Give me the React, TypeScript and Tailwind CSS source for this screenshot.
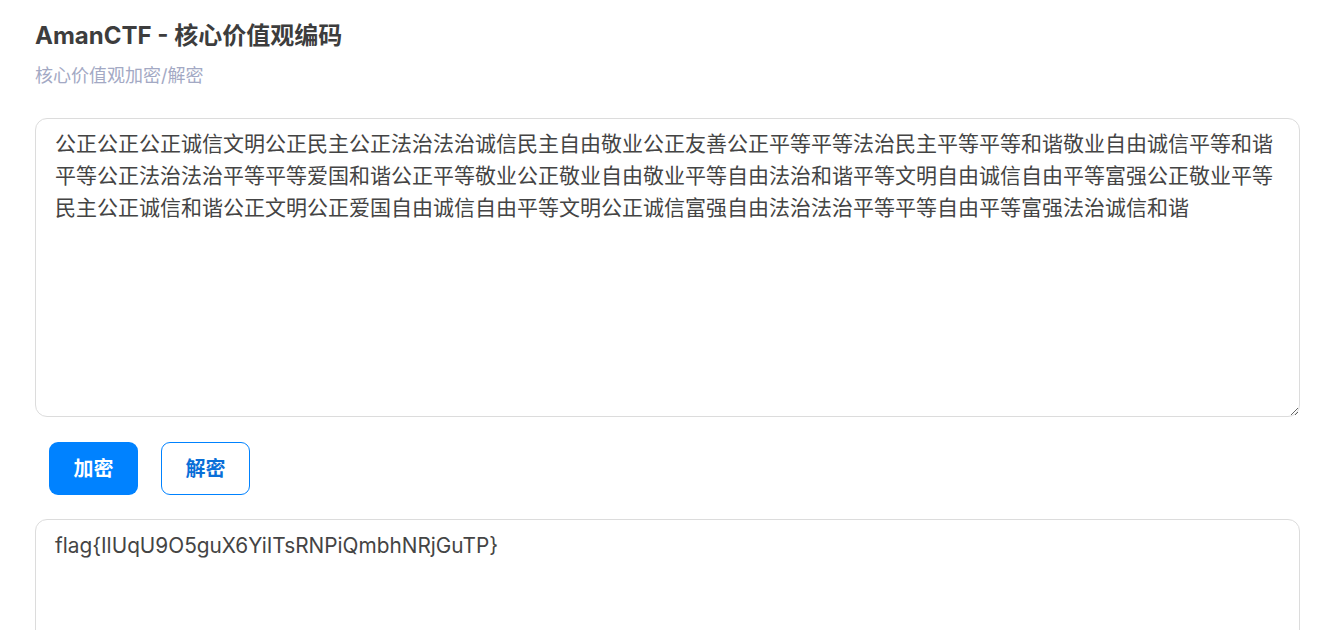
import { useState } from "react";

const FONT = "font-['Inter','Noto_Sans_CJK_SC',sans-serif]";

const CIPHER =
  "公正公正公正诚信文明公正民主公正法治法治诚信民主自由敬业公正友善公正平等平等法治民主平等平等和谐敬业自由诚信平等和谐平等公正法治法治平等平等爱国和谐公正平等敬业公正敬业自由敬业平等自由法治和谐平等文明自由诚信自由平等富强公正敬业平等民主公正诚信和谐公正文明公正爱国自由诚信自由平等文明公正诚信富强自由法治法治平等平等自由平等富强法治诚信和谐";

export default function App() {
  const [input, setInput] = useState(CIPHER);
  const [output, setOutput] = useState("flag{IlUqU9O5guX6YiITsRNPiQmbhNRjGuTP}");

  return (
    <div className={`${FONT} h-screen overflow-hidden bg-white pl-[35px] pr-[26px] pt-[20px]`}>
      {/* cabeçalho */}
      <h1 className="text-[24px] leading-[32px] font-bold text-[#3d3d3d]">
        AmanCTF - 核心价值观编码
      </h1>
      <p className="mt-[11px] text-[18px] leading-[26px] text-[#a3a9c4]">核心价值观加密/解密</p>

      {/* entrada */}
      <textarea
        value={input}
        onChange={(e) => setInput(e.target.value)}
        className="mt-[29px] block h-[299px] w-full resize-y rounded-[12px] border border-[#dcdcdc] px-[19px] pt-[9px] pb-[7px] text-[21px] leading-[32px] text-[#444] outline-none"
      />

      {/* botões */}
      <div className="ml-[14px] mt-[25px] flex gap-[23px]">
        <button className="h-[53px] w-[89px] rounded-[9px] bg-[#0082ff] text-[20px] font-bold text-white">
          加密
        </button>
        <button
          onClick={() => setOutput(input)}
          className="h-[53px] w-[89px] rounded-[9px] border border-[#0082ff] bg-white text-[20px] font-bold text-[#0a6fd8]"
        >
          解密
        </button>
      </div>

      {/* saída */}
      <textarea
        value={output}
        onChange={(e) => setOutput(e.target.value)}
        className="mt-[24px] block h-[299px] w-full resize-y rounded-[12px] border border-[#dcdcdc] px-[19px] pt-[10px] pb-[7px] text-[20.8px] leading-[32px] text-[#444] outline-none"
      />
    </div>
  );
}
